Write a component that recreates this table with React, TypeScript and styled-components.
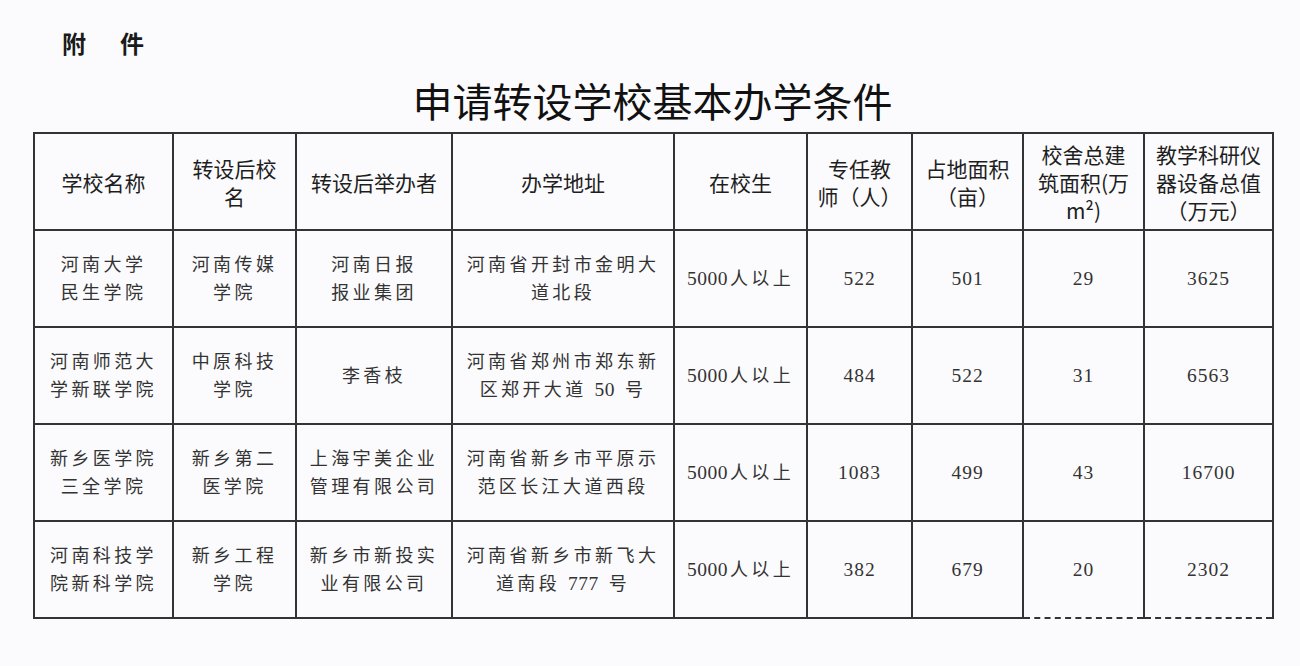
import styled, { createGlobalStyle } from 'styled-components';

const GlobalStyle = createGlobalStyle`
  html, body {
    margin: 0;
    padding: 0;
    background: #fbfbfd;
  }
  body {
    font-family: "Noto Sans CJK SC", "Noto Sans", sans-serif;
    color: #222;
  }
`;

const Page = styled.div`
  width: 1300px;
  height: 666px;
  box-sizing: border-box;
  padding: 28px 28px 0 33px;
  overflow: hidden;
`;

const Attachment = styled.div`
  padding-left: 29px;
  font-size: 24px;
  line-height: 30px;
  font-weight: 700;
  letter-spacing: 5px;
  color: #1a1a1a;
`;

const Title = styled.h1`
  margin: 18px 0 8px;
  text-align: center;
  font-size: 40px;
  line-height: 48px;
  font-weight: 400;
  color: #111;
`;

const Sheet = styled.table`
  width: 1239px;
  table-layout: fixed;
  border-collapse: collapse;
`;

const Col = styled.col<{ $w: number }>`
  width: ${(p) => p.$w}px;
`;

const Row = styled.tr`
  height: 97px;
`;

const HeadCell = styled.th`
  border: 2px solid #333;
  padding: 0 4px;
  font-family: "Noto Sans CJK SC", sans-serif;
  font-size: 21px;
  line-height: 28px;
  font-weight: 400;
  color: #1e1e1e;
  text-align: center;
  vertical-align: middle;
`;

const Cell = styled.td<{ $num?: boolean; $broken?: boolean }>`
  border: 2px solid #333;
  border-bottom-style: ${(p) => (p.$broken ? 'dashed' : 'solid')};
  padding: 0 4px;
  font-family: "Liberation Serif", "Noto Sans CJK SC", serif;
  font-size: ${(p) => (p.$num ? '19.5px' : '18px')};
  line-height: 28px;
  font-weight: 400;
  letter-spacing: ${(p) => (p.$num ? '1px' : '3.4px')};
  color: #333;
  text-align: center;
  vertical-align: middle;
  white-space: pre;
`;

const Digits = styled.span`
  font-size: 19.5px;
  letter-spacing: 0.5px;
  margin-right: 2px;
`;

const widths = [139, 123, 156, 222, 133, 105, 111, 121, 129];

const headers: string[][] = [
  ['学校名称'],
  ['转设后校', '名'],
  ['转设后举办者'],
  ['办学地址'],
  ['在校生'],
  ['专任教', '师（人）'],
  ['占地面积', '（亩）'],
  ['校舍总建', '筑面积(万', 'm²)'],
  ['教学科研仪', '器设备总值', '（万元）'],
];

type School = {
  name: string[];
  newName: string[];
  sponsor: string[];
  address: string[];
  students: string;
  teachers: string;
  land: string;
  building: string;
  equipment: string;
};

const schools: School[] = [
  {
    name: ['河南大学', '民生学院'],
    newName: ['河南传媒', '学院'],
    sponsor: ['河南日报', '报业集团'],
    address: ['河南省开封市金明大', '道北段'],
    students: '5000人以上',
    teachers: '522',
    land: '501',
    building: '29',
    equipment: '3625',
  },
  {
    name: ['河南师范大', '学新联学院'],
    newName: ['中原科技', '学院'],
    sponsor: ['李香枝'],
    address: ['河南省郑州市郑东新', '区郑开大道 50 号'],
    students: '5000人以上',
    teachers: '484',
    land: '522',
    building: '31',
    equipment: '6563',
  },
  {
    name: ['新乡医学院', '三全学院'],
    newName: ['新乡第二', '医学院'],
    sponsor: ['上海宇美企业', '管理有限公司'],
    address: ['河南省新乡市平原示', '范区长江大道西段'],
    students: '5000人以上',
    teachers: '1083',
    land: '499',
    building: '43',
    equipment: '16700',
  },
  {
    name: ['河南科技学', '院新科学院'],
    newName: ['新乡工程', '学院'],
    sponsor: ['新乡市新投实', '业有限公司'],
    address: ['河南省新乡市新飞大', '道南段 777 号'],
    students: '5000人以上',
    teachers: '382',
    land: '679',
    building: '20',
    equipment: '2302',
  },
];

// digits inside Chinese text sit tight, unlike the spaced-out characters
const Mixed = ({ text }: { text: string }) => (
  <>
    {text
      .split(/(\d+)/)
      .filter(Boolean)
      .map((part, i) =>
        /^\d+$/.test(part) ? <Digits key={i}>{part}</Digits> : <span key={i}>{part}</span>
      )}
  </>
);

const Lines = ({ lines }: { lines: string[] }) => (
  <>
    {lines.map((l, i) => (
      <span key={i}>
        {i > 0 && <br />}
        <Mixed text={l} />
      </span>
    ))}
  </>
);

const App = () => (
  <Page>
    <GlobalStyle />
    <Attachment>附　件</Attachment>
    <Title>申请转设学校基本办学条件</Title>
    <Sheet>
      <colgroup>
        {widths.map((w, i) => (
          <Col key={i} $w={w} />
        ))}
      </colgroup>
      <thead>
        <Row>
          {headers.map((h, i) => (
            <HeadCell key={i}>
              {h.map((l, j) => (
                <span key={j}>
                  {j > 0 && <br />}
                  {l}
                </span>
              ))}
            </HeadCell>
          ))}
        </Row>
      </thead>
      <tbody>
        {schools.map((s, r) => {
          const last = r === schools.length - 1;
          return (
            <Row key={s.name.join('')}>
              <Cell><Lines lines={s.name} /></Cell>
              <Cell><Lines lines={s.newName} /></Cell>
              <Cell><Lines lines={s.sponsor} /></Cell>
              <Cell><Lines lines={s.address} /></Cell>
              <Cell><Mixed text={s.students} /></Cell>
              <Cell $num>{s.teachers}</Cell>
              <Cell $num>{s.land}</Cell>
              <Cell $num $broken={last}>{s.building}</Cell>
              <Cell $num $broken={last}>{s.equipment}</Cell>
            </Row>
          );
        })}
      </tbody>
    </Sheet>
  </Page>
);

export default App;
